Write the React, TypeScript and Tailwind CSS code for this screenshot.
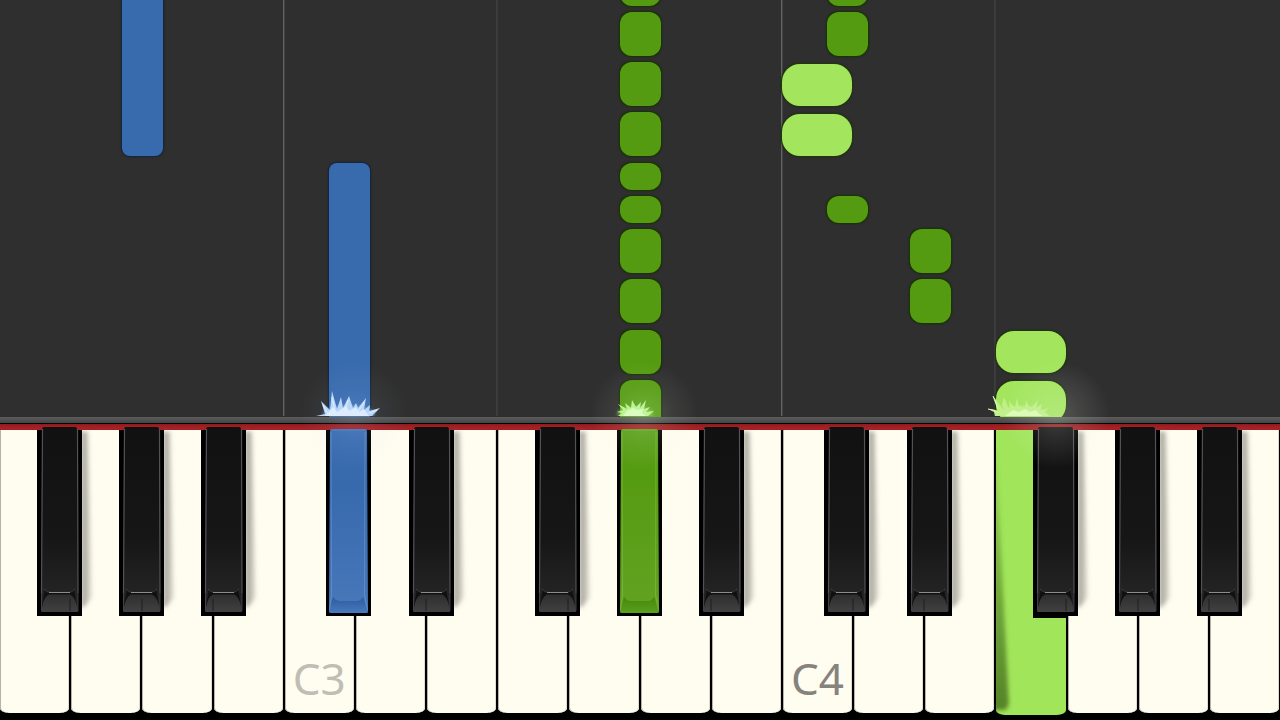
import { clsx } from "clsx";

const STAGE = 1280;
const ROLL = 417;
const pct = (n: number) => `${(n / STAGE) * 100}%`;

type Tone = "blue" | "green" | "lime";
type Note = { x: number; top: number; end: number; tone: Tone };

const noteTones: Record<Tone, string> = {
  blue: "bg-[#386bae] rounded-lg shadow-[0_0_0_1px_#16263c,0_0_2px_1px_#1c2330]",
  green: "bg-[#559b11] rounded-xl shadow-[0_0_0_1px_#1b3305,0_0_2px_1px_#1e2a14]",
  lime: "bg-[#a3e65d] rounded-[18px] shadow-[0_0_0_1px_#22380c,0_0_2px_1px_#1e2a14]",
};

const notes: Note[] = [
  { x: 122, top: -40, end: 156, tone: "blue" },
  { x: 329, top: 163, end: 440, tone: "blue" },
  { x: 620, top: -38, end: 6, tone: "green" },
  { x: 620, top: 12, end: 56, tone: "green" },
  { x: 620, top: 62, end: 106, tone: "green" },
  { x: 620, top: 112, end: 156, tone: "green" },
  { x: 620, top: 163, end: 190, tone: "green" },
  { x: 620, top: 196, end: 223, tone: "green" },
  { x: 620, top: 229, end: 273, tone: "green" },
  { x: 620, top: 279, end: 323, tone: "green" },
  { x: 620, top: 330, end: 374, tone: "green" },
  { x: 620, top: 380, end: 440, tone: "green" },
  { x: 827, top: -38, end: 6, tone: "green" },
  { x: 827, top: 12, end: 56, tone: "green" },
  { x: 827, top: 196, end: 223, tone: "green" },
  { x: 910, top: 229, end: 273, tone: "green" },
  { x: 910, top: 279, end: 323, tone: "green" },
  { x: 782, top: 64, end: 106, tone: "lime" },
  { x: 782, top: 114, end: 156, tone: "lime" },
  { x: 996, top: 331, end: 373, tone: "lime" },
  { x: 996, top: 381, end: 423, tone: "lime" },
];

const guides = [
  { x: 283, strong: true },
  { x: 496, strong: false },
  { x: 781, strong: true },
  { x: 994, strong: false },
];

const whiteKeys = [
  "F2", "G2", "A2", "B2", "C3", "D3", "E3", "F3", "G3",
  "A3", "B3", "C4", "D4", "E4", "F4", "G4", "A4", "B4",
];

type BlackKeyData = { name: string; x: number; seam: number; tone?: "blue" | "green"; low?: boolean };

const blackKeys: BlackKeyData[] = [
  { name: "F#2", x: 37, seam: 33 },
  { name: "G#2", x: 119, seam: 23 },
  { name: "A#2", x: 201, seam: 12 },
  { name: "C#3", x: 326, seam: 29, tone: "blue" },
  { name: "D#3", x: 409, seam: 17 },
  { name: "F#3", x: 535, seam: 33 },
  { name: "G#3", x: 617, seam: 23, tone: "green" },
  { name: "A#3", x: 699, seam: 12 },
  { name: "C#4", x: 824, seam: 29 },
  { name: "D#4", x: 907, seam: 17 },
  { name: "F#4", x: 1033, seam: 33, low: true },
  { name: "G#4", x: 1115, seam: 23 },
  { name: "A#4", x: 1197, seam: 12 },
];

function KeyDefs() {
  return (
    <svg className="absolute h-0 w-0" aria-hidden="true">
      <defs>
        <linearGradient id="face" x1="0" y1="0" x2="0" y2="1">
          <stop offset="0" stopColor="#111112" />
          <stop offset="0.6" stopColor="#161616" />
          <stop offset="1" stopColor="#282828" />
        </linearGradient>
        <linearGradient id="lip" x1="0" y1="0" x2="0" y2="1">
          <stop offset="0" stopColor="#2e2e2f" />
          <stop offset="1" stopColor="#414142" />
        </linearGradient>
        <linearGradient id="blue" x1="0" y1="0" x2="0" y2="1">
          <stop offset="0" stopColor="#3b6db1" />
          <stop offset="0.3" stopColor="#3769ad" />
          <stop offset="1" stopColor="#4878ba" />
        </linearGradient>
        <linearGradient id="blueLip" x1="0" y1="0" x2="0" y2="1">
          <stop offset="0" stopColor="#2d5b9d" />
          <stop offset="1" stopColor="#477abf" />
        </linearGradient>
        <linearGradient id="green" x1="0" y1="0" x2="0" y2="1">
          <stop offset="0" stopColor="#589e17" />
          <stop offset="0.25" stopColor="#559b11" />
          <stop offset="1" stopColor="#62a322" />
        </linearGradient>
        <linearGradient id="greenLip" x1="0" y1="0" x2="0" y2="1">
          <stop offset="0" stopColor="#46860c" />
          <stop offset="1" stopColor="#5ba01c" />
        </linearGradient>
        <linearGradient id="cast" x1="0" y1="0" x2="1" y2="0">
          <stop offset="0" stopColor="#77756d" stopOpacity="0.65" />
          <stop offset="0.5" stopColor="#77756d" stopOpacity="0.5" />
          <stop offset="1" stopColor="#77756d" stopOpacity="0.12" />
        </linearGradient>
        <filter id="soft" x="-50%" y="-5%" width="200%" height="110%">
          <feGaussianBlur stdDeviation="1.5" />
        </filter>
        <filter id="softer" x="-80%" y="-5%" width="260%" height="110%">
          <feGaussianBlur stdDeviation="2" />
        </filter>
        <linearGradient id="wedge" x1="0" y1="0" x2="0" y2="1">
          <stop offset="0" stopColor="#426a1c" stopOpacity="0.1" />
          <stop offset="1" stopColor="#426a1c" stopOpacity="0.8" />
        </linearGradient>
      </defs>
    </svg>
  );
}

function BlackKeyArt({ seam, tone, low }: BlackKeyData) {
  if (tone) {
    const edge = tone === "blue" ? "#6f9ad3" : "#83bd4b";
    return (
      <svg viewBox="0 0 45 189" preserveAspectRatio="none" className="block h-full w-full" aria-hidden="true">
        <path d="M0 3H45V189H0Z" fill="#000" />
        <path d="M4 4Q4 2 6 2H39Q41 2 41 4L42 184Q42 186 40 186H5Q3 186 3 184Z" fill={`url(#${tone})`} />
        <path d="M3 184L7 170Q10 174 14 174H31Q35 174 37 170L42 184Q42 186 40 186H5Q3 186 3 184Z" fill={`url(#${tone}Lip)`} />
        <path d="M5 5L5.500 168L3.500 183M39 5L38.500 168L41.500 183" fill="none" stroke={edge} strokeWidth="1" opacity="0.6" />
        <path d="M5 3H40" stroke={edge} opacity="0.4" />
      </svg>
    );
  }
  return (
    <svg viewBox="0 0 45 189" preserveAspectRatio="none" className="block h-full w-full overflow-visible" aria-hidden="true">
      <path d="M44 4L51 5L55 170L47 180H44Z" fill="url(#cast)" filter="url(#softer)" />
      <path d={low ? "M0 3H45V189H33V191H0Z" : "M0 3H45V189H0Z"} fill="#000" />
      <path d="M5 2Q5 0 7 0H38Q40 0 40 2L41 184Q41 185 40 185H5Q4 185 4 184Z" fill="url(#face)" />
      <path d="M4 184L8 162Q10 165 14 165H31Q34 165 37 162L41 184Z" fill="#101010" />
      <path d="M4.500 184Q6 170 12 167.500H33Q39 170 41 184Q41 185 40 185H5.500Q4.500 185 4.500 184Z" fill="url(#lip)" />
      <path d="M5.500 2L4.500 166M40.500 2L41 166" stroke="#535355" strokeWidth="1.200" />
      <path d="M4.500 166V184M41 166V184" stroke="#4b4b4c" strokeWidth="0.800" />
      <path d="M7 162Q10 165.500 14 165.500H31Q35 165.500 38 162" fill="none" stroke="#4c4c4c" strokeWidth="0.800" />
      <path d="M12 165.500H33" stroke="#8c8c8c" strokeWidth="1" />
      <path d={`M${seam} 172V184`} stroke="#171717" strokeWidth="0.800" />
    </svg>
  );
}

function Burst({ x, tone }: { x: number; tone: Tone }) {
  const left = { left: pct(x) };
  const box = "pointer-events-none absolute bottom-px h-10 w-[80px]";
  if (tone === "blue") {
    return (
      <svg viewBox="0 0 80 40" className={box} style={left} aria-hidden="true">
        <ellipse cx="39" cy="38" rx="26" ry="9" fill="#79a7e8" opacity="0.5" filter="url(#soft)" />
        <path d="M6 40L15 38L11 25L20 34L22 15L27 33L31 21L33 32L39 20L43 32L46 27L48 32L56 22L54 34L60 29L59 35L70 32L62 40Z" fill="#b9d6fb" />
        <path d="M15 40L23 31L27 36L36 30L39 35L46 31L49 36L54 33L59 40Z" fill="#e0efff" />
        <path d="M18 38L13 29M25 36L22 21M35 35L38 24M48 36L54 26M59 37L67 34" stroke="#edf6ff" strokeWidth="0.800" />
      </svg>
    );
  }
  if (tone === "green") {
    return (
      <svg viewBox="0 0 80 40" className={box} style={left} aria-hidden="true">
        <ellipse cx="35" cy="38" rx="18" ry="8" fill="#a5e667" opacity="0.4" filter="url(#soft)" />
        <path d="M18 40L22 37L17 36L23 34L18 28L27 33L25 27L31 32L32 24L36 31L41 26L40 32L46 24L44 33L50 31L46 36L54 35L48 40Z" fill="#b7f48c" />
        <path d="M23 40L27 35L33 32L37 34L43 33L42 37L46 40Z" fill="#d9ffbc" />
      </svg>
    );
  }
  return (
    <svg viewBox="0 0 80 40" className={box} style={left} aria-hidden="true">
      <ellipse cx="34" cy="39" rx="24" ry="9" fill="#d4ffa8" opacity="0.5" filter="url(#soft)" />
      <path d="M7 40L6 36L0 33L8 34L10 35L5 20L12 29L17 36L14 29L16 21L20 31L22 34L21 25L27 32L29 22L31 31L37 32L38 24L41 31L44 31L50 24L48 32L54 28L52 35L61 32L56 36L62 40Z" fill="#c0f08a" />
      <path d="M17 40L25 34L31 36L37 33L42 36L48 34L50 37L55 40Z" fill="#e1ffbd" opacity="0.8" />
      <path d="M11 37L5 34L0 33M10 33L5 20" stroke="#dcf6bd" strokeWidth="1" fill="none" />
    </svg>
  );
}

const glows = [
  { x: 354, className: "bg-[radial-gradient(closest-side,rgba(190,215,250,0.14),rgba(190,215,250,0.05)_50%,transparent)]" },
  { x: 644, className: "bg-[radial-gradient(closest-side,rgba(225,245,215,0.2),rgba(225,245,215,0.08)_50%,transparent)]" },
  { x: 1056, className: "bg-[radial-gradient(closest-side,rgba(230,240,225,0.22),rgba(230,240,225,0.1)_50%,transparent)]" },
];

export default function App() {
  return (
    <main className="flex min-h-screen flex-col overflow-hidden bg-black font-['Noto_Sans','Open_Sans',sans-serif]">
      <KeyDefs />
      <section aria-label="Falling notes" className="relative flex-1 overflow-hidden bg-[#2f2f2f]">
        {guides.map((g) => (
          <div
            key={g.x}
            className={clsx("absolute top-0 bottom-px w-px", g.strong ? "bg-[#636363] shadow-[1px_0_0_#424242]" : "bg-[#3d3d3d] shadow-[1px_0_0_#3a3a3a]")}
            style={{ left: pct(g.x) }}
          />
        ))}
        {notes.map((n) => (
          <div
            key={`${n.x}-${n.top}`}
            className={clsx("absolute", noteTones[n.tone])}
            style={{
              left: pct(n.x),
              width: pct(n.tone === "lime" ? 70 : 41),
              bottom: ROLL - n.end,
              height: n.end - n.top,
            }}
          />
        ))}
        <Burst x={310} tone="blue" />
        <Burst x={600} tone="green" />
        <Burst x={988} tone="lime" />
      </section>

      <section aria-label="Keyboard" className="relative">
        <div className="h-[6px] bg-linear-to-b from-[#5c5c5c] to-[#454545]" />
        <div className="h-px bg-black" />
        <div className="h-[6px] bg-linear-to-b from-[#8d1b1e] via-[#a32024] to-[#a52125]" />
        <div className="flex h-[290px] items-start gap-[2px] pr-px">
          {whiteKeys.map((name) => (
            <button
              key={name}
              type="button"
              aria-label={name}
              aria-pressed={name === "F4"}
              className={clsx(
                "relative flex min-w-0 flex-1 items-end overflow-hidden rounded-b-[9px_5px] pb-1 pl-2 text-[44px] leading-[62px]",
                name === "F4"
                  ? "h-[285px] bg-[#a1e55b]"
                  : "h-[283px] bg-[#fffcf0] shadow-[inset_1px_0_0_#b5b3a9,inset_-1px_0_0_#dedbd0]",
                name === "C3" ? "text-[#c0beb4]" : "text-[#85837b]",
              )}
            >
              {name === "F4" && (
                <svg viewBox="0 0 70 285" preserveAspectRatio="none" className="absolute inset-0 h-full w-full" aria-hidden="true">
                  <path d="M-4 20L0 20L13 274L10 280H-4Z" fill="url(#wedge)" filter="url(#softer)" />
                </svg>
              )}
              {name === "C3" || name === "C4" ? name : null}
            </button>
          ))}
        </div>
        {blackKeys.map((k) => (
          <button
            key={k.name}
            type="button"
            aria-label={k.name}
            aria-pressed={Boolean(k.tone)}
            className="absolute top-[10px] h-[189px]"
            style={{ left: pct(k.x), width: pct(45) }}
          >
            <BlackKeyArt {...k} />
          </button>
        ))}
        {glows.map((g) => (
          <div
            key={g.x}
            className={clsx("pointer-events-none absolute -top-[56px] h-[108px] w-[108px] -translate-x-1/2", g.className)}
            style={{ left: pct(g.x) }}
          />
        ))}
      </section>
    </main>
  );
}
